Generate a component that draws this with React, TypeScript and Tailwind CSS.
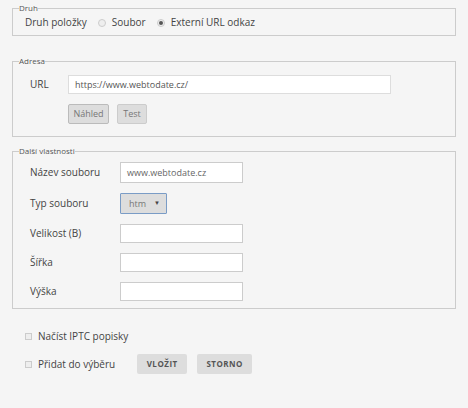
import React from 'react'

const font = { fontFamily: '"Open Sans", "Liberation Sans", sans-serif' }

function Radio({ checked }: { checked?: boolean }) {
  return (
    <span className="inline-flex h-[8px] w-[8px] items-center justify-center rounded-full border border-[#ccc] bg-[#eee]">
      {checked && <span className="h-[4px] w-[4px] rounded-full bg-[#555]" />}
    </span>
  )
}

function Check() {
  return <span className="inline-block h-[7px] w-[7px] border border-[#ccc] bg-[#eee]" />
}

function Row({ label, children }: { label: string; children: React.ReactNode }) {
  return (
    <div className="flex items-center">
      <span className="w-[90px] text-[10px] text-[#444]">{label}</span>
      {children}
    </div>
  )
}

const textInput = 'h-[19px] w-[123px] border border-[#ccc] bg-white px-[6px] text-[9px] text-[#666]'
const legend = 'ml-[-11px] text-[8px] leading-[12px] text-[#555]'

export default function App() {
  return (
    <div className="h-[408px] w-[468px] bg-[#f5f5f5] pt-[2px]" style={font}>
      {/* Druh */}
      <fieldset className="mx-[12px] h-[34px] border border-[#ccc] pl-[12px]">
        <legend className="ml-[-6px] text-[8px] leading-[12px] text-[#555]">Druh</legend>
        <div className="mt-[1px] flex items-center text-[10px] text-[#444]">
          <span>Druh položky</span>
          <span className="ml-[11px] mr-[6px] flex"><Radio /></span>
          <span>Soubor</span>
          <span className="ml-[11px] mr-[6px] flex"><Radio checked /></span>
          <span>Externí URL odkaz</span>
        </div>
      </fieldset>

      {/* Adresa */}
      <fieldset className="mx-[12px] mt-[19px] h-[82px] border border-[#ccc] pl-[17px]">
        <legend className={legend}>Adresa</legend>
        <div className="mt-[8px] flex items-center">
          <span className="w-[38px] text-[10px] text-[#444]">URL</span>
          <div className="flex h-[19px] w-[323px] items-center border border-[#ddd] bg-white px-[6px] text-[9px] text-[#555]">
            https://www.webtodate.cz/
          </div>
        </div>
        <div className="ml-[38px] mt-[10px] flex gap-[8px]">
          <button className="h-[20px] w-[41px] rounded-[2px] border border-[#bbb] bg-[#ddd] text-[9px] text-[#777]">Náhled</button>
          <button className="h-[20px] w-[30px] rounded-[2px] border border-[#ccc] bg-[#ddd] text-[9px] text-[#777]">Test</button>
        </div>
      </fieldset>

      {/* Další vlastnosti */}
      <fieldset className="mx-[12px] mt-[8px] h-[164px] border border-[#ccc] pl-[17px]">
        <legend className={legend}>Další vlastnosti</legend>
        <div className="mt-[5px] flex flex-col gap-[10px]">
          <Row label="Název souboru">
            <div className={`${textInput} flex h-[21px] items-center`}>www.webtodate.cz</div>
          </Row>
          <Row label="Typ souboru">
            <div className="flex h-[21px] w-[47px] items-center justify-between rounded-[1px] border border-[#7a9cc6] bg-[#ddd] pl-[8px] pr-[6px] text-[9px] text-[#777]">
              <span>htm</span>
              <span className="text-[6px] text-[#444]">▼</span>
            </div>
          </Row>
          <Row label="Velikost (B)">
            <div className={textInput} />
          </Row>
          <Row label="Šířka">
            <div className={textInput} />
          </Row>
          <Row label="Výška">
            <div className={textInput} />
          </Row>
        </div>
      </fieldset>

      {/* Volby */}
      <div className="ml-[25px] mt-[20px] flex items-center text-[10px] text-[#444]">
        <Check />
        <span className="ml-[6px]">Načíst IPTC popisky</span>
      </div>
      <div className="ml-[25px] mt-[10px] flex items-center text-[10px] text-[#444]">
        <Check />
        <span className="ml-[6px]">Přidat do výběru</span>
        <button className="ml-[22px] h-[20px] w-[50px] rounded-[2px] bg-[#ddd] text-[8px] font-bold tracking-[0.5px] text-[#555]">VLOŽIT</button>
        <button className="ml-[10px] h-[20px] w-[55px] rounded-[2px] bg-[#ddd] text-[8px] font-bold tracking-[0.5px] text-[#555]">STORNO</button>
      </div>
    </div>
  )
}
